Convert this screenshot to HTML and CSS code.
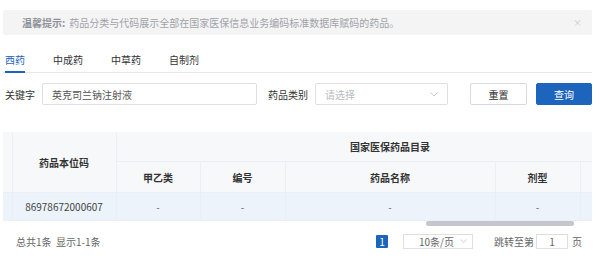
FILE: index.html
```html
<!DOCTYPE html>
<html lang="zh-CN">
<head>
    <meta charset="UTF-8">
    <meta name="viewport" content="width=device-width, initial-scale=1.0">
    <title>药品分类与代码</title>
    <link rel="stylesheet" href="styles.css">
</head>
<body>
    <div class="page">
        <div class="alert">
            <span class="alert-title">温馨提示:</span>
            <span class="alert-text">药品分类与代码展示全部在国家医保信息业务编码标准数据库赋码的药品。</span>
            <span class="alert-close">×</span>
        </div>

        <div class="tabs">
            <div class="tab active">西药</div>
            <div class="tab">中成药</div>
            <div class="tab">中草药</div>
            <div class="tab">自制剂</div>
        </div>

        <div class="search">
            <label class="label">关键字</label>
            <div class="input keyword">英克司兰钠注射液</div>
            <label class="label type-label">药品类别</label>
            <div class="input select">
                <span class="placeholder">请选择</span>
                <svg class="arrow" width="8" height="5" viewBox="0 0 8 5"><path d="M0.5 0.5 L4 4 L7.5 0.5" fill="none" stroke="#c0c4cc" stroke-width="0.9"/></svg>
            </div>
            <button class="btn reset">重置</button>
            <button class="btn primary">查询</button>
        </div>

        <div class="table-wrap">
            <table class="grid">
                <colgroup>
                    <col style="width: 9px">
                    <col style="width: 104px">
                    <col style="width: 84px">
                    <col style="width: 85px">
                    <col style="width: 210px">
                    <col style="width: 85px">
                    <col style="width: 84px">
                </colgroup>
                <thead>
                    <tr class="head-top">
                        <th rowspan="2" class="spacer"></th>
                        <th rowspan="2">药品本位码</th>
                        <th colspan="5">国家医保药品目录</th>
                    </tr>
                    <tr class="head-sub">
                        <th>甲乙类</th>
                        <th>编号</th>
                        <th>药品名称</th>
                        <th>剂型</th>
                        <th></th>
                    </tr>
                </thead>
                <tbody>
                    <tr>
                        <td class="spacer"></td>
                        <td class="code">86978672000607</td>
                        <td>-</td>
                        <td>-</td>
                        <td>-</td>
                        <td>-</td>
                        <td></td>
                    </tr>
                </tbody>
            </table>
            <div class="scrollbar"></div>
        </div>

        <div class="pager">
            <span class="total">总共1条&nbsp;&nbsp;显示1-1条</span>
            <div class="pager-right">
                <span class="page-num">1</span>
                <div class="page-size">
                    <span>10条/页</span>
                    <svg class="arrow" width="7" height="4" viewBox="0 0 7 4"><path d="M0.5 0.5 L3.5 3.3 L6.5 0.5" fill="none" stroke="#c0c4cc" stroke-width="0.8"/></svg>
                </div>
                <span class="jump">跳转至第</span>
                <div class="jump-input">1</div>
                <span class="jump-unit">页</span>
            </div>
        </div>
    </div>
</body>
</html>
```

FILE: styles.css
```css
body {
    margin: 0;
    font-family: "Noto Sans CJK SC", "Noto Sans", sans-serif;
    font-size: 10px;
    color: #333;
    background: #fff;
}
.page {
    width: 589px;
    padding: 10px 0 0 3px;
}
.alert {
    height: 25px;
    display: flex;
    align-items: center;
    padding: 0 0 0 19px;
    background: #f4f4f5;
    border-radius: 2px;
    color: #a0a3a8;
    white-space: nowrap;
}
.alert-title {
    font-weight: bold;
    color: #8f9399;
    margin-right: 4px;
}
.alert-close {
    margin-left: auto;
    margin-right: 10px;
    color: #c8cacf;
    font-size: 9px;
}
.tabs {
    display: flex;
    margin-top: 14px;
    border-bottom: 1px solid #e4e7ed;
    padding-left: 2px;
}
.tab {
    line-height: 22px;
    margin-right: 28px;
    border-bottom: 2px solid transparent;
    margin-bottom: -1px;
    color: #333;
}
.tab.active {
    color: #1d64bd;
    border-bottom-color: #1d64bd;
}
.search {
    display: flex;
    align-items: center;
    margin-top: 10px;
    height: 22px;
    padding-left: 2px;
    white-space: nowrap;
}
.search > * {
    flex-shrink: 0;
}
.label {
    margin-right: 7px;
    color: #333;
}
.type-label {
    margin-left: 11px;
}
.input {
    height: 20px;
    border: 1px solid #dcdfe6;
    border-radius: 2px;
    display: flex;
    align-items: center;
    padding: 0 9px;
    box-sizing: content-box;
    color: #555;
}
.keyword {
    width: 195px;
}
.select {
    width: 113px;
}
.placeholder {
    color: #b8bcc4;
}
.select .arrow {
    margin-left: auto;
}
.btn {
    height: 22px;
    border-radius: 2px;
    font-family: inherit;
    font-size: 10px;
    padding: 0;
    cursor: pointer;
}
.reset {
    width: 57px;
    margin-left: 22px;
    border: 1px solid #d6d9df;
    background: #fff;
    color: #333;
}
.primary {
    width: 56px;
    margin-left: 9px;
    border: 1px solid #1d64bd;
    background: #1d64bd;
    color: #fff;
}
.table-wrap {
    position: relative;
    overflow: hidden;
    margin-top: 27px;
    padding-bottom: 6px;
}
.grid {
    table-layout: fixed;
    border-collapse: collapse;
    width: 661px;
}
.grid th, .grid td {
    border: 1px solid #ebeef5;
    text-align: center;
    padding: 0;
}
.grid th {
    background: #f7f8fa;
    font-weight: bold;
    color: #333;
}
.grid .spacer {
    border-left: none;
    border-top: none;
}
.head-top th {
    height: 29px;
    border-top: none;
}
.head-sub th {
    height: 30px;
}
.grid td {
    height: 27px;
    background: #edf3fb;
    color: #666;
}
.grid td.code {
    color: #444;
}
.scrollbar {
    position: absolute;
    left: 423px;
    bottom: 1px;
    width: 148px;
    height: 5px;
    border-radius: 3px;
    background: #c4c6cb;
}
.pager {
    display: flex;
    align-items: center;
    height: 16px;
    margin-top: 6px;
    padding: 0 10px 0 13px;
    color: #666;
    white-space: nowrap;
}
.pager-right {
    margin-left: auto;
    display: flex;
    align-items: center;
}
.pager-right > * {
    flex-shrink: 0;
}
.page-num {
    width: 12px;
    height: 13px;
    line-height: 13px;
    text-align: center;
    background: #1d64bd;
    color: #fff;
    border-radius: 1px;
}
.page-size {
    width: 58px;
    height: 13px;
    margin-left: 15px;
    border: 1px solid #dcdfe6;
    display: flex;
    align-items: center;
    padding: 0 5px 0 5px;
    justify-content: space-between;
    color: #666;
}
.page-size span {
    margin-left: 10px;
}
.jump {
    margin-left: 21px;
    color: #666;
}
.jump-input {
    width: 30px;
    height: 13px;
    margin-left: 2px;
    border: 1px solid #dcdfe6;
    text-align: center;
    line-height: 13px;
}
.jump-unit {
    margin-left: 4px;
}
```
